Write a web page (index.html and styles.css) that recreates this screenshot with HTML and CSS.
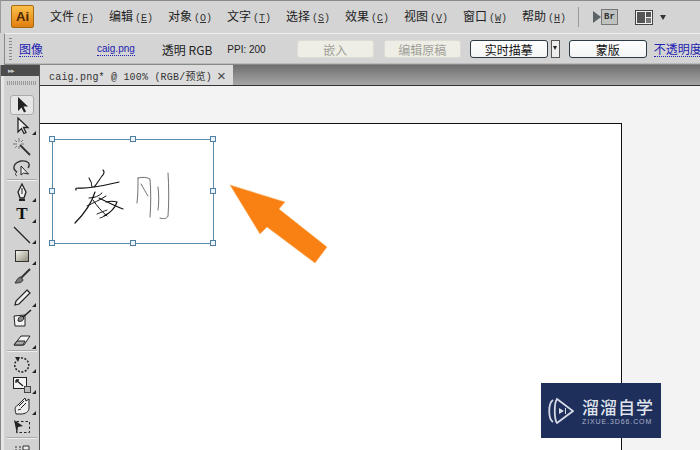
FILE: index.html
```html
<!DOCTYPE html>
<html lang="en">

<head>
    <title>caig.png</title>
    <meta charset="UTF-8">
    <meta name="viewport" content="width=device-width, initial-scale=1">
    <link rel="stylesheet" href="styles.css">
</head>

<body>
    <div class="app">
        <header class="menubar">
            <div class="ai-logo">Ai</div>
            <nav class="menus">
                <span class="menu">文件<i>(<u>F</u>)</i></span>
                <span class="menu">编辑<i>(<u>E</u>)</i></span>
                <span class="menu">对象<i>(<u>O</u>)</i></span>
                <span class="menu">文字<i>(<u>T</u>)</i></span>
                <span class="menu">选择<i>(<u>S</u>)</i></span>
                <span class="menu">效果<i>(<u>C</u>)</i></span>
                <span class="menu">视图<i>(<u>V</u>)</i></span>
                <span class="menu">窗口<i>(<u>W</u>)</i></span>
                <span class="menu">帮助<i>(<u>H</u>)</i></span>
            </nav>
            <div class="menu-sep"></div>
            <div class="br-icon">
                <svg width="8" height="14" viewBox="0 0 8 14"><path d="M0 1l8 6-8 6z" fill="#5c6468"/></svg>
                <span>Br</span>
            </div>
            <svg class="layout-icon" width="18" height="15" viewBox="0 0 18 15">
                <rect x=".5" y=".5" width="17" height="14" fill="#f2f2f2" stroke="#444"/>
                <rect x="2" y="2" width="8" height="11" fill="#555"/>
                <rect x="11" y="2" width="5" height="5" fill="#555"/>
                <rect x="11" y="8" width="5" height="5" fill="#777"/>
            </svg>
            <div class="caret"></div>
        </header>

        <div class="controlbar">
            <div class="grip"></div>
            <a class="link link-first">图像</a>
            <a class="link link-file">caig.png</a>
            <span class="info info-mode">透明 RGB</span>
            <span class="info info-ppi">PPI: 200</span>
            <button class="btn btn-off btn-embed">嵌入</button>
            <button class="btn btn-off btn-edit">编辑原稿</button>
            <button class="btn btn-trace">实时描摹</button>
            <div class="btn-drop"></div>
            <button class="btn btn-mask">蒙版</button>
            <a class="link link-opacity">不透明度</a>
        </div>

        <div class="workspace">
            <aside class="toolbox">
                <div class="toolbox-head"><span>▸▸</span></div>
                <div class="toolbox-grip"></div>

                <div class="tool tool-active">
                    <svg width="20" height="20" viewBox="0 0 20 20"><path d="M6 2v14l3.500-3.500 2.500 5 2-1-2.500-5H16z" fill="#222"/></svg>
                </div>
                <div class="tool more">
                    <svg width="20" height="20" viewBox="0 0 20 20"><path d="M6 2v14l3.500-3.500 2.500 5 2-1-2.500-5H16z" fill="#eee" stroke="#222" stroke-width="1.300"/></svg>
                </div>
                <div class="tool">
                    <svg width="20" height="20" viewBox="0 0 20 20"><path d="M8 8l10 10" stroke="#333" stroke-width="1.800"/><path d="M7 1v4M1 7h4M3 3l2 2M11 3L9 5M3 11l2-2M7 9v3M9 7h3" stroke="#777" fill="none"/></svg>
                </div>
                <div class="tool tool-lasso">
                    <svg width="20" height="20" viewBox="0 0 20 20"><path d="M5 14C0 11 1 5 9 3c7-1 10 3 7 7" fill="none" stroke="#333" stroke-width="1.400"/><path d="M5 14c-2 1-2 3 0 4" fill="none" stroke="#333"/><path d="M9 8v9l2.500-2 5 1z" fill="#eee" stroke="#222"/></svg>
                </div>
                <div class="tool-sep"></div>
                <div class="tool more">
                    <svg width="20" height="20" viewBox="0 0 20 20"><path d="M10 1l4 8-2 6H8L6 9z" fill="#eee" stroke="#222" stroke-width="1.300"/><path d="M10 5v6" stroke="#222"/><path d="M7 16h6v2H7z" fill="#222"/></svg>
                </div>
                <div class="tool more"><span class="tool-t">T</span></div>
                <div class="tool more">
                    <svg width="20" height="20" viewBox="0 0 20 20"><path d="M2 2l16 16" stroke="#222" stroke-width="1.200"/></svg>
                </div>
                <div class="tool more">
                    <svg width="20" height="20" viewBox="0 0 20 20"><defs><linearGradient id="rectfill" x1="0" y1="0" x2="1" y2="1"><stop offset="0" stop-color="#f8f8f0"/><stop offset="1" stop-color="#8c8a78"/></linearGradient></defs><rect x="3.500" y="4.500" width="13" height="11" fill="url(#rectfill)" stroke="#333"/></svg>
                </div>
                <div class="tool">
                    <svg width="20" height="20" viewBox="0 0 20 20"><path d="M18 2L9 11" stroke="#333" stroke-width="2"/><path d="M9 10c-3 0-4 3-6 6 3 0 7 0 8-3z" fill="#777" stroke="#333"/></svg>
                </div>
                <div class="tool more">
                    <svg width="20" height="20" viewBox="0 0 20 20"><path d="M15 2l3 3L7 16l-4 1 1-4z" fill="#eee" stroke="#222" stroke-width="1.200"/></svg>
                </div>
                <div class="tool">
                    <svg width="20" height="20" viewBox="0 0 20 20"><path d="M2 7l11-1v11H3z" fill="#f4f4f4" stroke="#222"/><path d="M19 1L9 10" stroke="#222" stroke-width="1.500"/><path d="M10 7c-3 0-4 3-4 5 3 1 5 0 6-3z" fill="#888" stroke="#222"/></svg>
                </div>
                <div class="tool more">
                    <svg width="20" height="20" viewBox="0 0 20 20"><path d="M2 15l7-9h9l-6 9z" fill="#f2f2f2" stroke="#222"/><path d="M2 15l3-4h8l-2 4z" fill="#aaa" stroke="#222"/></svg>
                </div>
                <div class="tool-sep"></div>
                <div class="tool more">
                    <svg width="20" height="20" viewBox="0 0 20 20"><path d="M9 4a7 7 0 1 1-5 3" fill="none" stroke="#222" stroke-width="1.500" stroke-dasharray="2 1.500"/><path d="M3 3l5 0-2 5z" fill="#222"/></svg>
                </div>
                <div class="tool more">
                    <svg width="20" height="20" viewBox="0 0 20 20"><rect x="1.500" y="2.500" width="13" height="11" fill="#f2f2f2" stroke="#222"/><rect x="12.500" y="11.500" width="6" height="6" fill="#bbb" stroke="#444"/><path d="M4 5l7 6M4 5h3M4 5v3" stroke="#222" fill="none" stroke-width="1.300"/></svg>
                </div>
                <div class="tool more">
                    <svg width="20" height="20" viewBox="0 0 20 20"><path d="M4 18c-1-4-2-7 2-9l7-7 1 3 3-2v9c0 4-4 6-8 6z" fill="#eee" stroke="#222"/><path d="M7 10l5-5M9 12l5-5M6 14l3-1" stroke="#222"/></svg>
                </div>
                <div class="tool">
                    <svg width="20" height="20" viewBox="0 0 20 20"><rect x="4.500" y="4.500" width="13" height="11" fill="none" stroke="#222" stroke-dasharray="2.500 2"/><path d="M2 3l9 6-5 1-1 7z" fill="#222"/></svg>
                </div>
                <div class="tool-sep"></div>
                <div class="tool">
                    <svg width="20" height="20" viewBox="0 0 20 20"><path d="M3 6h2M7 6h2M3 9h2M7 9h2" stroke="#333"/><path d="M11 5h6v4h-6z" fill="#eee" stroke="#333"/></svg>
                </div>
            </aside>

            <main class="tabarea">
                <div class="tabstrip">
                    <div class="tab">
                        <span>caig.png* @ 100% (RGB/预览)</span>
                        <span class="tab-close">×</span>
                    </div>
                </div>
                <div class="canvas">
                    <div class="artboard"></div>

                    <div class="selection">
                        <span class="handle h-tl"></span><span class="handle h-tc"></span><span class="handle h-tr"></span>
                        <span class="handle h-ml"></span><span class="handle h-mr"></span>
                        <span class="handle h-bl"></span><span class="handle h-bc"></span><span class="handle h-br"></span>
                        <!-- the placed signature image -->
                        <svg class="signature" width="160" height="103" viewBox="0 0 160 103">
                            <g fill="none" stroke="#111" stroke-linecap="round">
                                <path d="M23 50c-1-2 1-2 3-2 12 1 27-3 40-6" stroke-width="1.200"/>
                                <path d="M50 30c2 2 1 4-1 6-3 4-5 8-8 11M36 38c2 3 3 6 3 9" stroke-width="1.100"/>
                                <path d="M42 52C38 65 30 75 22 83" stroke-width="1.200"/>
                                <path d="M36 58c6 0 10-2 13-5M34 66c6-3 13-6 19-10M40 60c4 6 9 12 14 16" stroke-width="1"/>
                                <path d="M46 58c8 4 16 8 24 11M53 62c4-1 8-1 11 0-2 6-7 11-13 14" stroke-width="1.100"/>
                                <path d="M44 74c3-1 7-3 10-4M47 78c3-1 5-2 7-4" stroke-width=".9"/>
                            </g>
                            <g fill="none" stroke="#333" stroke-width=".7" stroke-linecap="round">
                                <path d="M85 38c4-1 9-1 12 1 1 12 1 26 0 38"/>
                                <path d="M85 38c0 8 0 17-1 25M88 44c3 5 5 9 7 12"/>
                                <path d="M105 47c1 8 1 16 0 23M115 33c1 14 1 30 0 43-1 3-5 3-8 2"/>
                            </g>
                        </svg>
                    </div>

                    <svg class="arrow" width="110" height="90" viewBox="0 0 110 90">
                        <path d="M3 3l55 17-6 7 48 38-12 16-48-36-7 7z" fill="#f98012" stroke="#fbb56c" stroke-width=".6"/>
                    </svg>

                    <div class="watermark">
                        <svg width="26" height="30" viewBox="0 0 26 30">
                            <path d="M5 4C0 7 0 23 5 26" fill="none" stroke="#d5dae6" stroke-width="1.800"/>
                            <path d="M9 3l16 12L9 27c-3-4-3-20 0-24z" fill="none" stroke="#d5dae6" stroke-width="1.800"/>
                            <path d="M11 12l5 3-5 3z" fill="#d5dae6"/>
                            <path d="M17.500 12v6" stroke="#d5dae6"/>
                        </svg>
                        <div class="wm-text">
                            <strong>溜溜自学</strong>
                            <span>ZIXUE.3D66.COM</span>
                        </div>
                    </div>
                </div>
            </main>
        </div>
    </div>
</body>

</html>
```

FILE: styles.css
```css
* {
    box-sizing: border-box;
}

html,
body {
    margin: 0;
    height: 100%;
    overflow: hidden;
}

body {
    font-family: "Noto Sans CJK SC", "Liberation Sans", sans-serif;
    font-size: 12px;
    color: #222;
    background: #d2d2d2;
}

.app {
    width: 700px;
    height: 450px;
    display: flex;
    flex-direction: column;
}

/* top menu */
.menubar {
    height: 33px;
    flex: none;
    display: flex;
    align-items: center;
    padding-left: 10px;
    background: #d4d4d4;
    border-top: 1px solid #8a8a8a;
    border-left: 1px solid #9a9a9a;
}

.ai-logo {
    width: 23px;
    height: 23px;
    border-radius: 2px;
    margin-bottom: 2px;
    border: 1px solid #a86a10;
    background: linear-gradient(#fbc04a, #e07f10);
    color: #4a2604;
    font: bold 13px/21px "Liberation Sans", sans-serif;
    text-align: center;
}

.menus {
    display: flex;
    margin-left: 16px;
    margin-bottom: 2px;
}

.menu {
    width: 59px;
    font-size: 12px;
    line-height: 16px;
    white-space: nowrap;
}

.menu i {
    font: 10px "Liberation Mono", monospace;
    margin-left: 2px;
    color: #333;
}

.menu-sep {
    width: 1px;
    height: 20px;
    background: #999;
    margin-left: -3px;
}

.br-icon {
    display: flex;
    align-items: center;
    margin-left: 14px;
}

.br-icon span {
    width: 17px;
    height: 16px;
    background: #c0c2c0;
    border: 1px solid #777;
    font: bold 9px/14px "Liberation Mono", monospace;
    text-align: center;
    color: #333;
}

.layout-icon {
    margin-left: 17px;
}

.caret {
    width: 0;
    height: 0;
    margin-left: 7px;
    border-left: 3.5px solid transparent;
    border-right: 3.5px solid transparent;
    border-top: 5px solid #333;
}

/* control panel */
.controlbar {
    height: 32px;
    flex: none;
    display: flex;
    align-items: center;
    margin-left: 4px;
    background: #d4d4d4;
    border-top: 1px solid #f0f0f0;
    border-left: 1px solid #888;
    border-bottom: 1px solid #888;
    box-shadow: inset 0 -1px 0 #bbb;
    white-space: nowrap;
}

.grip {
    width: 3px;
    height: 22px;
    flex: none;
    margin-left: 4px;
    background: repeating-linear-gradient(#888 0 1px, transparent 1px 3px);
}

.link {
    flex: none;
    color: #2222b0;
    border-bottom: 1px dotted #2222b0;
    line-height: 14px;
}

.link-first {
    margin-left: 7px;
}

.link-file {
    margin-left: 54px;
    font: 10px/13px "Liberation Sans", sans-serif;
}

.info {
    flex: none;
    color: #222;
}

.info-mode {
    margin-left: 27px;
    font-size: 12px;
}

.info-ppi {
    margin-left: 15px;
    font: 10px "Liberation Sans", sans-serif;
}

.btn {
    height: 18px;
    flex: none;
    padding: 0;
    font: 12px/15px "Noto Sans CJK SC", sans-serif;
    background: linear-gradient(#fff, #f3f4f5);
    border: 1px solid #2b3a44;
    border-radius: 3px;
    color: #111;
}

.btn-off {
    background: #eeeee6;
    border-color: #dcdcd4;
    color: #a0a098;
}

.btn-embed {
    width: 77px;
    margin-left: 31px;
}

.btn-edit {
    width: 77px;
    margin-left: 10px;
}

.btn-trace {
    width: 78px;
    margin-left: 9px;
}

.btn-drop {
    width: 9px;
    height: 18px;
    flex: none;
    margin-left: 3px;
    background: #eee;
    border: 1px solid #555;
    position: relative;
}

.btn-drop::after {
    content: "";
    position: absolute;
    left: 1.5px;
    top: 5px;
    border-left: 2.5px solid transparent;
    border-right: 2.5px solid transparent;
    border-top: 4px solid #222;
}

.btn-mask {
    width: 78px;
    margin-left: 9px;
}

.link-opacity {
    margin-left: 7px;
}

/* body */
.workspace {
    flex: 1;
    min-height: 0;
    display: flex;
}

.toolbox {
    width: 40px;
    flex: none;
    padding-left: 4px;
    background: #d2d2d2;
    border-left: 1px solid #888;
    border-right: 1px solid #555;
    box-shadow: inset 3px 0 0 #e6e6e6;
    overflow: hidden;
}

.toolbox-head {
    height: 11px;
    margin-left: -4px;
    background: #4c4c4c;
    color: #ccc;
    font-size: 7px;
    line-height: 11px;
    padding-left: 7px;
    letter-spacing: -1px;
}

.toolbox-grip {
    height: 4px;
    margin: 5px 2px 10px;
    background: repeating-linear-gradient(90deg, #999 0 1px, transparent 1px 2px);
}

.tool {
    position: relative;
    height: 21px;
    display: flex;
    align-items: center;
    justify-content: center;
}

.tool-lasso {
    height: 22px;
}

.tool-active {
    height: 20px;
    margin: 0 5px;
    background: #e6e6e6;
    border: 1px solid #aaa;
    border-radius: 3px;
}

.more::after {
    content: "";
    position: absolute;
    right: 3px;
    bottom: 1px;
    border-left: 4px solid transparent;
    border-bottom: 4px solid #222;
}

.tool-sep {
    height: 1px;
    margin: 1px 2px;
    background: #f0f0f0;
    box-shadow: 0 -1px 0 #aaa;
}

.tool-t {
    font: bold 17px/20px "Liberation Serif", serif;
    color: #111;
}

.tabarea {
    flex: 1;
    min-width: 0;
    display: flex;
    flex-direction: column;
}

.tabstrip {
    height: 21px;
    flex: none;
    background: linear-gradient(#6e6e6e, #a6a6a6);
    border-bottom: 1px solid #333;
}

.tab {
    width: 193px;
    height: 20px;
    display: flex;
    align-items: center;
    justify-content: space-between;
    padding: 0 7px 0 9px;
    background: #dcdcdc;
    font: 10px "Liberation Mono", "Noto Sans CJK SC", monospace;
    letter-spacing: .2px;
    color: #333;
    white-space: nowrap;
}

.tab-close {
    font: 15px "Liberation Sans", sans-serif;
    color: #444;
}

.canvas {
    position: relative;
    flex: 1;
    background: #f3f3f3;
    overflow: hidden;
}

/* items on the canvas */
.artboard {
    position: absolute;
    left: 0;
    top: 37px;
    width: 582px;
    height: 400px;
    background: #fff;
    border-top: 1px solid #111;
    border-right: 1px solid #111;
}

.selection {
    position: absolute;
    left: 12px;
    top: 53px;
    width: 162px;
    height: 105px;
    border: 1px solid #5f8cad;
}

.signature {
    position: absolute;
    left: 0;
    top: 0;
}

.handle {
    position: absolute;
    width: 6px;
    height: 6px;
    background: #eaf3fa;
    border: 1px solid #4f7fa3;
    margin: -3px;
}

.h-tl { left: -1px; top: -1px; }
.h-tc { left: 80px; top: -1px; }
.h-tr { left: 160px; top: -1px; }
.h-ml { left: -1px; top: 51px; }
.h-mr { left: 160px; top: 51px; }
.h-bl { left: -1px; top: 103px; }
.h-bc { left: 80px; top: 103px; }
.h-br { left: 160px; top: 103px; }

.arrow {
    position: absolute;
    left: 187px;
    top: 96px;
}

.watermark {
    position: absolute;
    left: 501px;
    top: 297px;
    width: 120px;
    height: 55px;
    display: flex;
    align-items: center;
    gap: 8px;
    padding-left: 7px;
    background: #1f2f5c;
    color: #dfe3ec;
    white-space: nowrap;
}

.wm-text {
    display: flex;
    flex-direction: column;
}

.wm-text strong {
    font-size: 17px;
    line-height: 21px;
    font-weight: 500;
    letter-spacing: 1px;
}

.wm-text span {
    font: 7px/9px "Liberation Sans", sans-serif;
    letter-spacing: .9px;
    color: #a9b2c8;
}
```
